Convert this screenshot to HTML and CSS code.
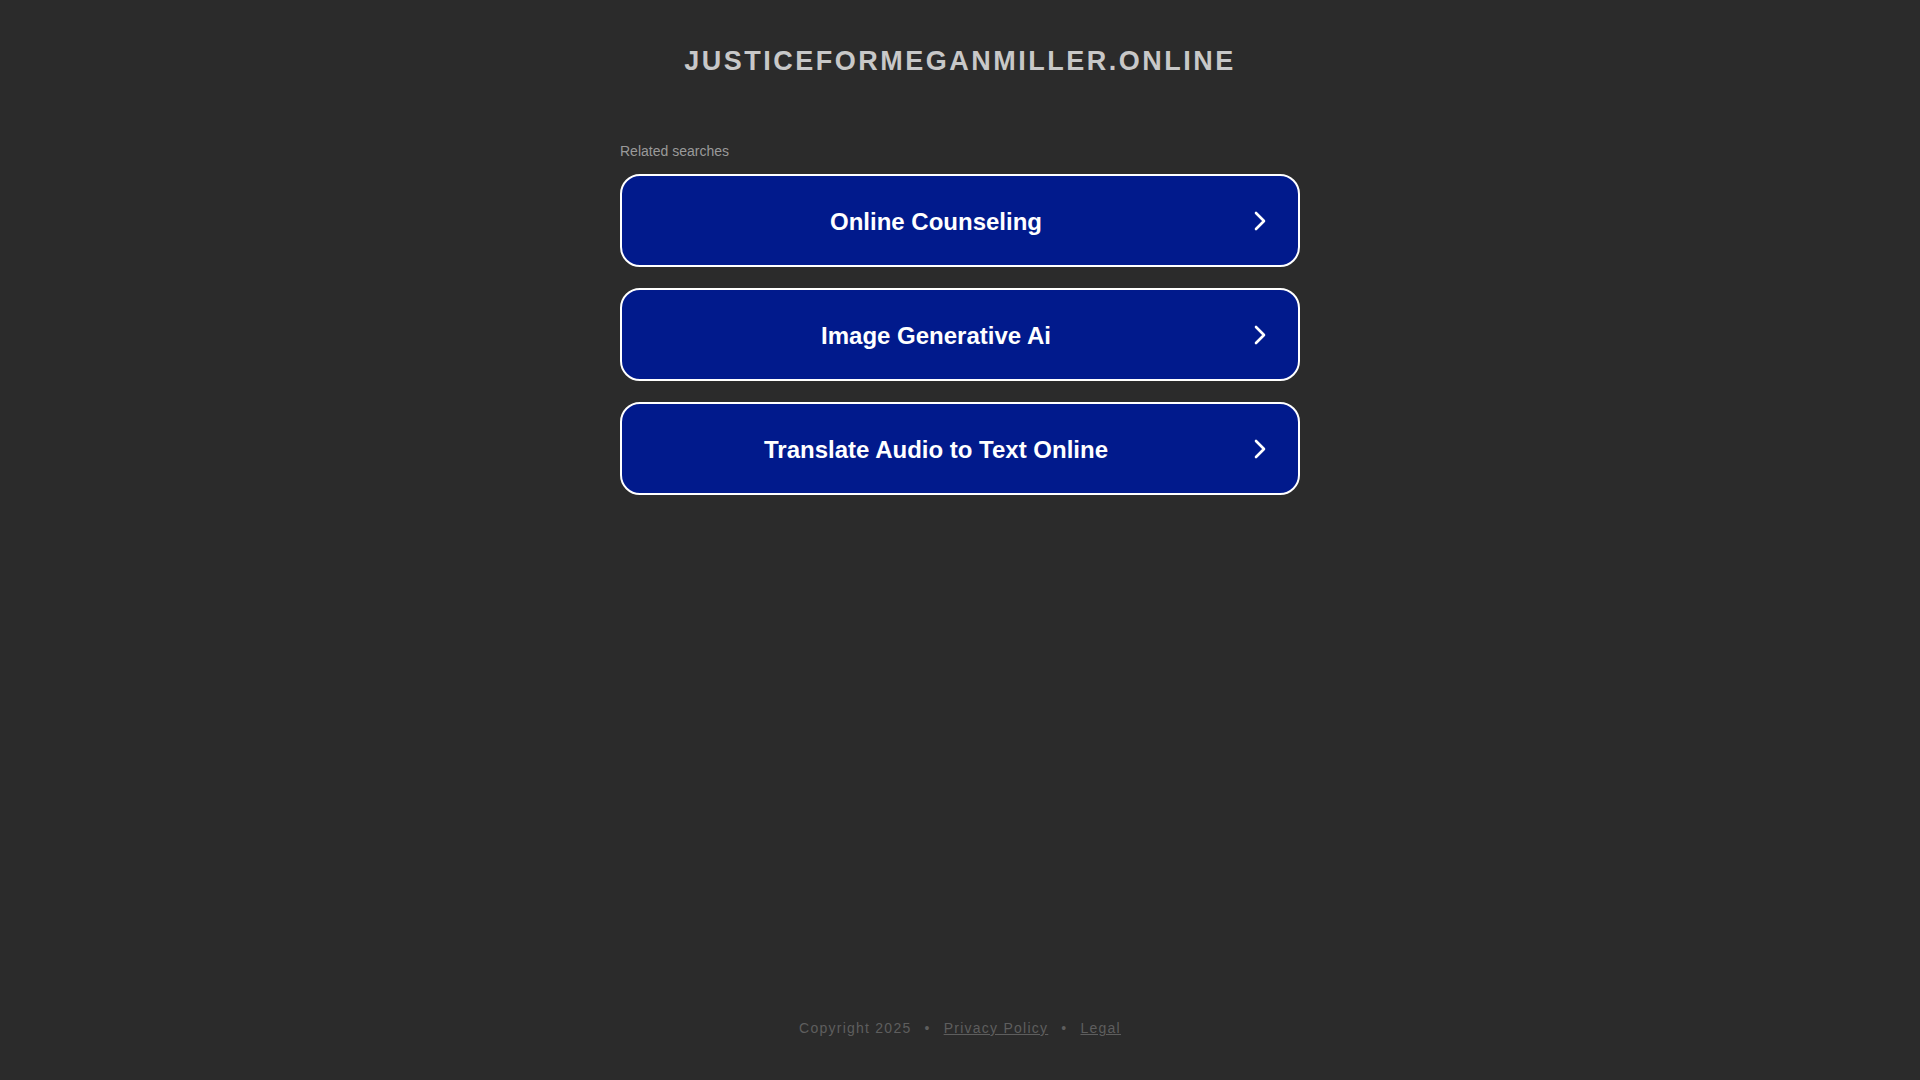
FILE: index.html
```html
<!DOCTYPE html>
<html lang="en">
<head>
<meta charset="utf-8">
<title>justiceformeganmiller.online</title>
<link rel="stylesheet" href="styles.css">
</head>
<body>
<div class="page">
  <h1 class="domain">JUSTICEFORMEGANMILLER.ONLINE</h1>
  <main class="results">
    <div class="label">Related searches</div>
    <a class="result" href="#"><span class="result-text">Online Counseling</span><svg class="chev" viewBox="0 0 12 20" width="12" height="20"><path d="M2 2 L10 10 L2 18" fill="none" stroke="#fff" stroke-width="2.6" stroke-linecap="round" stroke-linejoin="round"/></svg></a>
    <a class="result" href="#"><span class="result-text">Image Generative Ai</span><svg class="chev" viewBox="0 0 12 20" width="12" height="20"><path d="M2 2 L10 10 L2 18" fill="none" stroke="#fff" stroke-width="2.6" stroke-linecap="round" stroke-linejoin="round"/></svg></a>
    <a class="result" href="#"><span class="result-text">Translate Audio to Text Online</span><svg class="chev" viewBox="0 0 12 20" width="12" height="20"><path d="M2 2 L10 10 L2 18" fill="none" stroke="#fff" stroke-width="2.6" stroke-linecap="round" stroke-linejoin="round"/></svg></a>
  </main>
  <footer class="footer">
    <span>Copyright 2025</span><span class="dot">•</span><a href="#">Privacy Policy</a><span class="dot">•</span><a href="#">Legal</a>
  </footer>
</div>
</body>
</html>
```
FILE: styles.css
```css
html, body {
  margin: 0;
  padding: 0;
  background: #2b2b2b;
  font-family: "Liberation Sans", Arial, sans-serif;
}
.page {
  min-height: 100vh;
  display: flex;
  flex-direction: column;
  align-items: center;
}
.domain {
  margin: 45px 0 0;
  font-size: 27px;
  line-height: 32px;
  font-weight: 700;
  letter-spacing: 2.5px;
  color: #c8c8c8;
  text-align: center;
}
.results {
  width: 680px;
  margin-top: 65px;
  display: flex;
  flex-direction: column;
  gap: 21px;
}
.label {
  font-size: 14px;
  line-height: 16px;
  color: #9a9a9a;
  margin-bottom: -6px;
  padding-top: 1px;
}
.result {
  box-sizing: border-box;
  height: 93px;
  border: 2px solid #ffffff;
  border-radius: 20px;
  background: #011a8c;
  display: flex;
  align-items: center;
  padding: 0 32px 0 0;
  text-decoration: none;
}
.result-text {
  flex: 1;
  text-align: center;
  padding-left: 16px;
  padding-top: 2px;
  font-size: 24px;
  font-weight: 700;
  color: #ffffff;
}
.chev {
  flex: none;
  margin-left: 20px;
}
.footer {
  margin-top: auto;
  padding-bottom: 44px;
  font-size: 14px;
  line-height: 16px;
  letter-spacing: 1.25px;
  color: #5e5e5e;
  display: flex;
  align-items: center;
}
.footer a {
  color: #5e5e5e;
  text-decoration: underline;
}
.dot {
  margin: 0 13px;
}
```
